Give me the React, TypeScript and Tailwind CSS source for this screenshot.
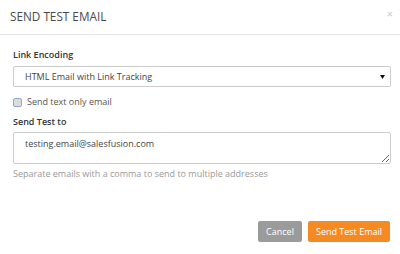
import React from 'react';

const App: React.FC = () => {
  return (
    <div className="w-[400px] h-[254px] bg-white flex flex-col font-['Open_Sans',sans-serif]">
      {/* header */}
      <div className="h-[35px] flex items-center justify-between pl-[10px] pr-[7px] border-b border-[#e5e5e5]">
        <h2 className="text-[11.75px] leading-none text-[#4a4a4a]">SEND TEST EMAIL</h2>
        <span className="self-start mt-[8px] text-[11px] leading-none text-[#c8c8c8]">×</span>
      </div>

      {/* form */}
      <div className="pl-[13px] pr-[9px] flex flex-col">
        <label className="mt-[13px] text-[9px] leading-[14px] font-semibold text-[#333]">Link Encoding</label>
        <div className="mt-[4px] h-[21px] border border-[#ccc] rounded-[2px] flex items-center justify-between pl-[11px] pr-[5px]">
          <span className="text-[9px] text-[#444]">HTML Email with Link Tracking</span>
          <svg width="5" height="4" viewBox="0 0 5 4">
            <path d="M0 0h5L2.5 4z" fill="#111" />
          </svg>
        </div>

        <div className="mt-[8px] h-[14px] flex items-center gap-[5px]">
          <div className="w-[9px] h-[9px] rounded-[2px] border border-[#8fa8d6] bg-[#dcdcdc]" />
          <span className="text-[9px] text-[#555]">Send text only email</span>
        </div>

        <label className="mt-[6px] text-[9px] leading-[14px] font-semibold text-[#333]">Send Test to</label>
        <textarea
          readOnly
          defaultValue="testing.email@salesfusion.com"
          className="mt-[3px] h-[32px] border border-[#ccc] rounded-[2px] pl-[11px] pt-[4px] text-[9px] leading-[14px] text-[#444] outline-none"
        />
        <p className="mt-[3px] text-[9px] leading-[14px] text-[#999]">Separate emails with a comma to send to multiple addresses</p>
      </div>

      {/* footer buttons */}
      <div className="mt-auto mb-[12px] flex justify-end gap-[6px] pr-[10px]">
        <button className="w-[44px] h-[21px] rounded-[2px] bg-[#9b9b9b] text-white text-[9px]">Cancel</button>
        <button className="w-[82px] h-[21px] rounded-[2px] bg-[#f58a23] text-white text-[9px]">Send Test Email</button>
      </div>
    </div>
  );
};

export default App;
